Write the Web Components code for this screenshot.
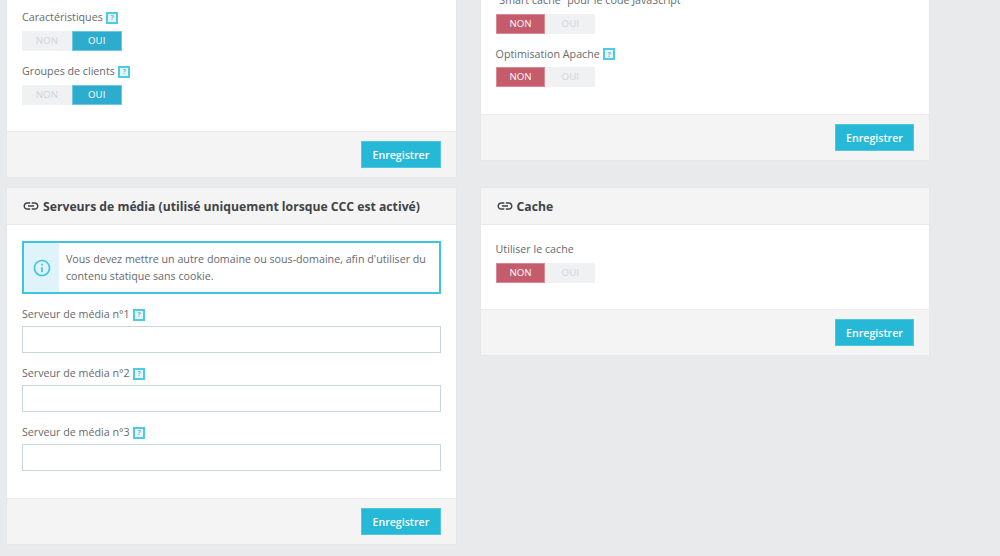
<!DOCTYPE html>
<html lang="fr">
<head>
<meta charset="utf-8">
<title>Performances</title>
<style>
html,body{margin:0;padding:0;height:556px;overflow:hidden;background:#e9eaec;font-family:"Open Sans","Liberation Sans",sans-serif;}
</style>
</head>
<body>
<x-page>
  <x-card style="--pad-top:28px;--body-h:151px;--lm:5px">
    <x-field label="Caractéristiques" help gap="11"><x-switch value="oui"></x-switch></x-field>
    <x-field label="Groupes de clients" help style="--lm:4.6px"><x-switch value="oui"></x-switch></x-field>
  </x-card>
  <x-card style="--pad-top:10.5px;--body-h:134px">
    <x-field label="“Smart cache” pour le code JavaScript" gap="11" style="--lm:5px"><x-switch value="non"></x-switch></x-field>
    <x-field label="Optimisation Apache" help><x-switch value="non"></x-switch></x-field>
  </x-card>
  <x-card heading="Serveurs de média (utilisé uniquement lorsque CCC est activé)" style="--pad-top:16px;--body-h:273px;--lm:3px">
    <x-alert>Vous devez mettre un autre domaine ou sous-domaine, afin d'utiliser du contenu statique sans cookie.</x-alert>
    <x-field label="Serveur de média n°1" help gap="11"><x-input></x-input></x-field>
    <x-field label="Serveur de média n°2" help gap="11"><x-input></x-input></x-field>
    <x-field label="Serveur de média n°3" help><x-input></x-input></x-field>
  </x-card>
  <x-card heading="Cache" style="--pad-top:15px;--body-h:84px;--lm:5px">
    <x-field label="Utiliser le cache"><x-switch value="non"></x-switch></x-field>
  </x-card>
</x-page>
<script>
function def(name, css, html){
  customElements.define(name, class extends HTMLElement{
    connectedCallback(){
      if(this.shadowRoot) return;
      const r=this.attachShadow({mode:"open"});
      r.innerHTML="<style>"+css+"</style>"+(typeof html==="function"?html(this):html);
    }
  });
}
def("x-page",
 ":host{display:grid;grid-template-columns:448.7px 448.7px;column-gap:24.9px;row-gap:11px;align-items:start;margin:-20px 0 0 7px;color:#666a6e;font-size:10.7px;}",
 "<slot></slot>");
def("x-help",
 ":host{display:inline-flex;flex:none;align-items:center;justify-content:center;box-sizing:border-box;width:12px;height:12px;border:2px solid #4ecbe2;background:#e3f6fa;color:#7fb2c2;font:700 7px/1 'Open Sans',sans-serif;margin:1px 0 0 3.5px;}",
 "?");
def("x-field",
 ":host{display:block;}label{display:flex;align-items:center;height:18px;font-size:10.7px;line-height:18px;color:#666a6e;margin-bottom:var(--lm,4px);white-space:nowrap;}",
 h=>{const g=h.getAttribute("gap");
   return `<label><span>${h.getAttribute("label")}</span>${h.hasAttribute("help")?"<x-help></x-help>":""}</label><slot></slot>${g?`<div style="height:${g}px"></div>`:""}`;});
def("x-switch",
 ":host{display:flex;width:99.6px;height:20px;font-size:9.7px;line-height:20px;text-align:center;}span{flex:1;background:#eff1f2;color:#cdd6da;}span.oui{background:#2eacce;color:#fff;box-shadow:inset 0 0 0 1px #6cc8e0;}span.non{background:#c45c6c;color:#fff;box-shadow:inset 0 0 0 1px #d98a96;}",
 h=>{const v=h.getAttribute("value");
   return `<span class="${v==="non"?"non":""}">NON</span><span class="${v==="oui"?"oui":""}">OUI</span>`;});
def("x-input",
 ":host{display:block;}input{display:block;box-sizing:border-box;width:100%;height:27px;border:1px solid #c4d8dd;background:#fff;padding:0 8px;margin:0;outline:0;font:11px 'Open Sans',sans-serif;}",
 "<input type='text' aria-label='Serveur de média'>");
def("x-alert",
 ":host{display:flex;box-sizing:border-box;height:53px;border:2px solid #3ec5de;margin-bottom:11px;background:#fff;}.i{flex:0 0 35px;background:#def4fa;display:flex;align-items:center;justify-content:center;}svg{width:20px;height:20px;fill:#3ec5de;}.t{padding:8px 7px 0;font-size:10.7px;line-height:16.5px;color:#666a6e;}",
 `<div class="i"><svg viewBox="0 0 24 24"><path d="M11 7h2v2h-2zm0 4h2v6h-2zm1-9C6.48 2 2 6.48 2 12s4.48 10 10 10 10-4.48 10-10S17.52 2 12 2zm0 18c-4.41 0-8-3.59-8-8s3.59-8 8-8 8 3.59 8 8-3.59 8-8 8z"/></svg></div><div class="t"><slot></slot></div>`);
def("x-card",
 ":host{display:block;background:#fff;box-shadow:0 0 1px rgba(0,0,0,.08);}header{display:flex;align-items:center;gap:3px;box-sizing:border-box;height:37px;padding:0 15px;background:#f4f4f4;border-bottom:1px solid #e8e9ea;font-size:12.2px;font-weight:700;color:#404347;white-space:nowrap;}header span{padding-top:1px;}svg{width:18px;height:18px;fill:#404347;flex:none;}.b{box-sizing:border-box;height:var(--body-h);padding:var(--pad-top) 15px 0;}footer{display:flex;justify-content:flex-end;box-sizing:border-box;height:46px;padding:9px 15px 0;background:#f4f4f4;border-top:1px solid #ececec;}button{box-sizing:border-box;width:79.6px;height:27px;margin:0;padding:0;border:1px solid #4ec7df;background:#25b9d7;color:#fff;font:600 10.6px 'Open Sans',sans-serif;}",
 h=>{const t=h.getAttribute("heading");
   return (t?`<header><svg viewBox="0 0 24 24"><path d="M3.9 12c0-1.71 1.39-3.1 3.1-3.1h4V7H7c-2.76 0-5 2.24-5 5s2.24 5 5 5h4v-1.9H7c-1.71 0-3.1-1.39-3.1-3.1zM8 13h8v-2H8v2zm9-6h-4v1.9h4c1.71 0 3.1 1.39 3.1 3.1s-1.39 3.1-3.1 3.1h-4V17h4c2.76 0 5-2.24 5-5s-2.24-5-5-5z"/></svg><span>${t}</span></header>`:"")+`<div class="b"><slot></slot></div><footer><button type="button">Enregistrer</button></footer>`;});
</script>
</body>
</html>
